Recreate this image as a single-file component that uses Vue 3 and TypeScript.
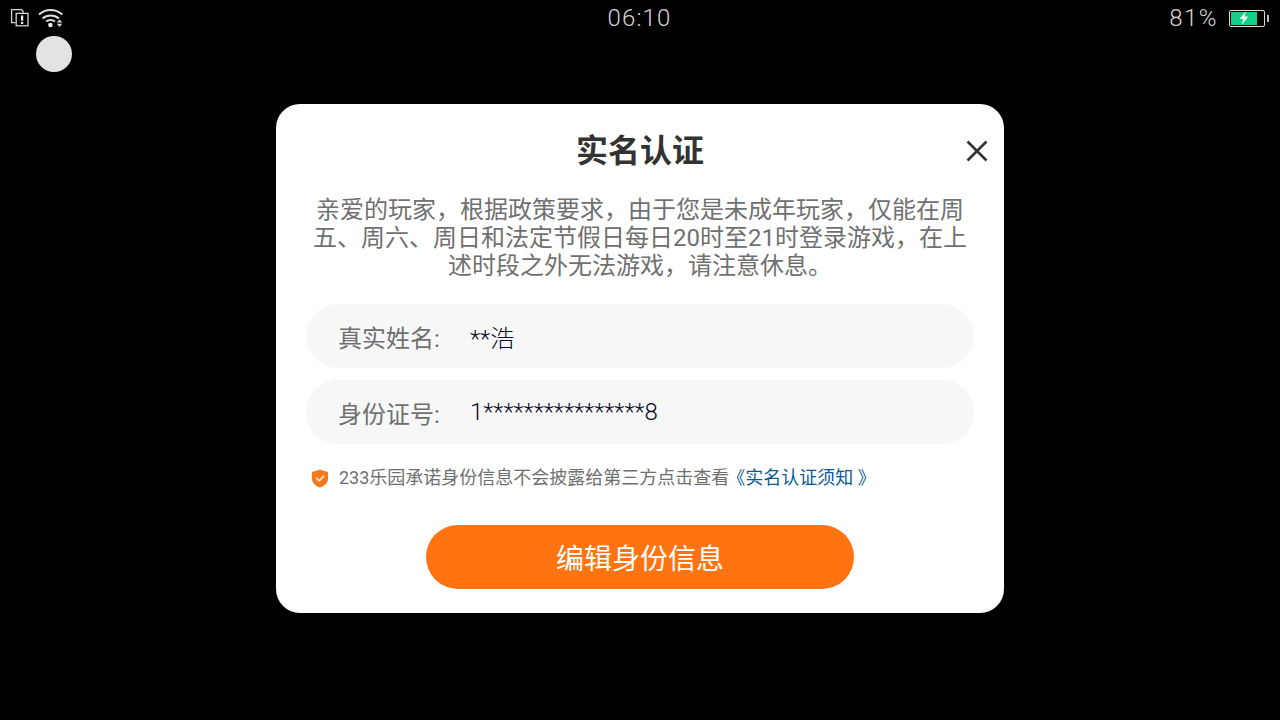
<template>
  <div class="screen">
    <header class="status-bar">
      <div class="status-left">
        <svg class="icon-sim" width="20" height="20" viewBox="0 0 20 20" fill="none" stroke="#d4d4d4" stroke-width="1.3">
          <path d="M5.6 14.6H1.6V1.6H11.6L13 3.2V5" />
          <rect x="6.2" y="5.4" width="11.8" height="12.4" />
          <path d="M12.1 7.4V12.8M12.1 14V16" stroke="#f0f0f0" stroke-width="2.2" />
        </svg>
        <svg class="icon-wifi" width="26" height="20" viewBox="0 0 26 20" fill="none" stroke="#dcdcdc" stroke-width="2">
          <path d="M1 6.6C7.5 .6 17.5 .6 24.4 6.6" />
          <path d="M4.6 10.4C9 6.4 16.5 6.4 20.8 10.4" />
          <path d="M8.2 13.6C10.6 11.4 14.6 11.4 17 13.6" />
          <circle cx="12.4" cy="17" r="2.2" fill="#f0f0f0" stroke="none" />
          <path d="M18.6 14.4H24.4L21.5 11.6Z M18.8 15.8H24.2L21.5 19Z" fill="#d8d8d8" stroke="none" />
        </svg>
      </div>
      <div class="status-time">06:10</div>
      <div class="status-right">
        <span class="battery-pct">81%</span>
        <div class="battery">
          <div class="battery-body">
            <div class="battery-fill" :style="{ width: batteryLevel + '%' }">
              <svg width="12" height="14" viewBox="0 0 12 14"><path d="M7.6 0 1.6 8H5L3.8 14 10.4 5.6H6.8Z" fill="#dffcec" /></svg>
            </div>
          </div>
          <div class="battery-cap"></div>
        </div>
      </div>
    </header>

    <div class="float-ball"></div>

    <main class="overlay">
      <section class="dialog">
        <div class="dialog-head">
          <h1 class="title">实名认证</h1>
          <button class="close" aria-label="关闭">
            <svg width="24" height="24" viewBox="0 0 24 24" fill="none" stroke="#333" stroke-width="2.6">
              <path d="M2.5 2.5 21.5 21.5M21.5 2.5 2.5 21.5" />
            </svg>
          </button>
        </div>
        <p class="desc">亲爱的玩家，根据政策要求，由于您是未成年玩家，仅能在周五、周六、周日和法定节假日每日20时至21时登录游戏，在上述时段之外无法游戏，请注意休息。</p>
        <div class="fields">
          <div v-for="f in fields" :key="f.label" class="field">
            <span class="field-label">{{ f.label }}</span>
            <span class="field-value">{{ f.value }}</span>
          </div>
        </div>
        <div class="notice">
          <svg class="shield" width="18" height="19" viewBox="0 0 20 21">
            <path d="M2.4 2.6C5 2.4 7.6 1.8 9.4.8 9.8.6 10.2.6 10.6.8 12.4 1.8 15 2.4 17.6 2.6 18.4 2.7 19 3.2 19 4V10.6C19 15.4 15 19 10 20.6 5 19 1 15.4 1 10.6V4C1 3.2 1.6 2.7 2.4 2.6Z" fill="#f57a1c" />
            <path d="M5.8 9.8 9.2 13 14.4 7.6" fill="none" stroke="#ffe3c6" stroke-width="2" />
          </svg>
          <span>233乐园承诺身份信息不会披露给第三方点击查看<a class="link">《实名认证须知 》</a></span>
        </div>
        <button class="submit">编辑身份信息</button>
      </section>
    </main>
  </div>
</template>

<script setup lang="ts">
const batteryLevel = 81

const fields = [
  { label: '真实姓名:', value: '**浩' },
  { label: '身份证号:', value: '1****************8' },
]
</script>

<style>
html, body {
  margin: 0;
  background: #000;
}
</style>

<style scoped>
.screen {
  position: relative;
  width: 1280px;
  height: 720px;
  overflow: hidden;
  background: #000;
  font-family: Roboto, "Noto Sans CJK SC", sans-serif;
}

.status-bar {
  position: absolute;
  top: 0;
  left: 0;
  right: 0;
  height: 36px;
  display: grid;
  grid-template-columns: 1fr auto 1fr;
  align-items: center;
  padding: 0 11px 0 10px;
  color: #d4d4d4;
}

.status-left {
  display: flex;
  align-items: center;
  gap: 8px;
}

.status-time {
  font-size: 24px;
  letter-spacing: 1.1px;
  font-weight: 300;
}

.status-right {
  display: flex;
  align-items: center;
  justify-content: flex-end;
  gap: 11px;
}

.battery-pct {
  font-size: 24px;
  letter-spacing: 1.5px;
  font-weight: 300;
}

.battery {
  display: flex;
  align-items: center;
  gap: 2px;
}

.battery-body {
  width: 36px;
  height: 17px;
  box-sizing: border-box;
  padding: 1px;
  border: 1px solid #ddd;
  border-radius: 2px;
  background: #000;
}

.battery-fill {
  height: 100%;
  display: flex;
  align-items: center;
  justify-content: center;
  background: #12cf85;
}

.battery-cap {
  width: 2px;
  height: 7px;
  background: #bbb;
}

.float-ball {
  position: absolute;
  left: 36px;
  top: 36px;
  width: 36px;
  height: 36px;
  border-radius: 50%;
  background: #e3e3e3;
}

.overlay {
  height: 100%;
  display: flex;
  align-items: flex-start;
  justify-content: center;
  padding-top: 104px;
  box-sizing: border-box;
}

.dialog {
  width: 728px;
  height: 509px;
  box-sizing: border-box;
  padding: 0 30px;
  background: #fff;
  border-radius: 24px;
  display: flex;
  flex-direction: column;
  align-items: stretch;
}

.dialog-head {
  position: relative;
  height: 92px;
  display: flex;
  align-items: center;
  justify-content: center;
  flex: none;
}

.title {
  margin: 2px 0 0;
  font-size: 32px;
  line-height: 40px;
  font-weight: 700;
  color: #333;
}

.close {
  position: absolute;
  right: -15px;
  top: 35px;
  width: 24px;
  height: 24px;
  padding: 0;
  border: 0;
  background: none;
  display: flex;
}

.desc {
  margin: 0;
  font-size: 24px;
  line-height: 28px;
  color: #707070;
  text-align: center;
}

.fields {
  margin-top: 24px;
  display: flex;
  flex-direction: column;
  gap: 12px;
}

.field {
  height: 64px;
  border-radius: 32px;
  background: #f7f7f8;
  display: flex;
  align-items: center;
  padding-left: 32px;
  font-size: 24px;
}

.field-label {
  width: 132px;
  color: #707070;
}

.field-value {
  color: #0a0a24;
  font-weight: 300;
  letter-spacing: -0.1px;
}

.notice {
  margin-top: 24px;
  padding-left: 5px;
  display: flex;
  align-items: center;
  gap: 10px;
  font-size: 18px;
  line-height: 20px;
  color: #707070;
}

.shield {
  margin-top: 1px;
}

.link {
  margin-left: -2px;
  color: #0b5a96;
}

.submit {
  margin: 37px auto 0;
  width: 428px;
  height: 64px;
  border: 0;
  border-radius: 32px;
  background: #ff7310;
  color: #fff;
  font-family: inherit;
  font-size: 28px;
}
</style>
